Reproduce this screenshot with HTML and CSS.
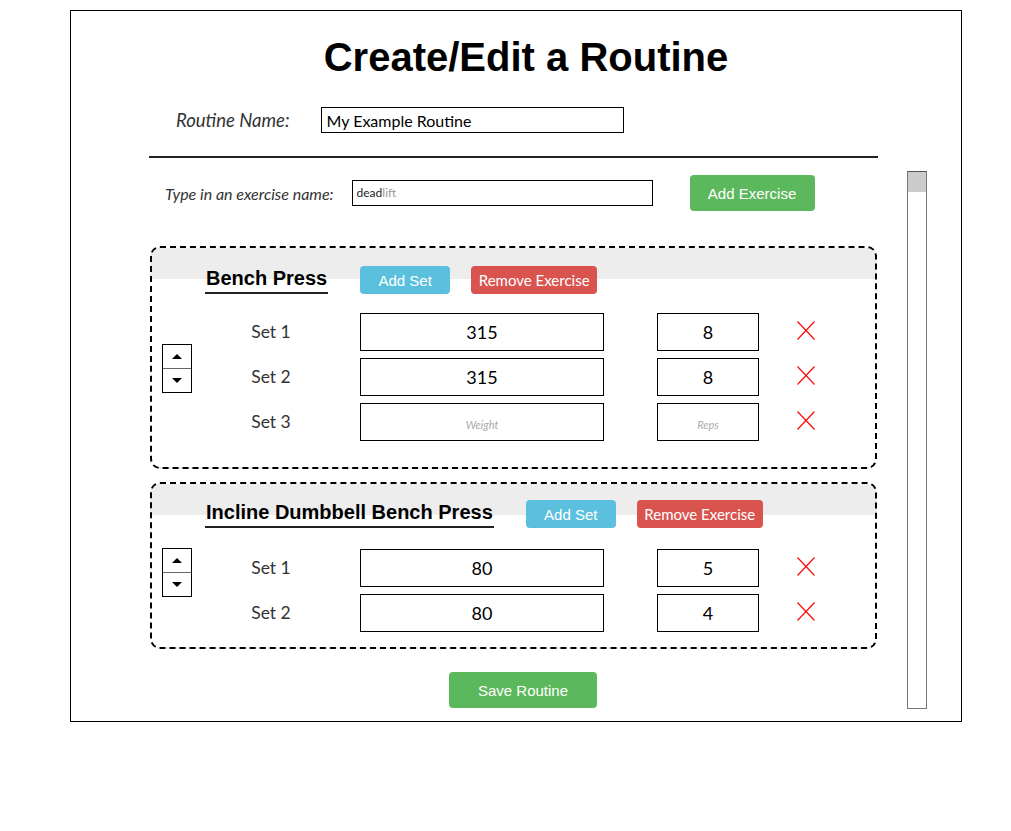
FILE: index.html
```html
<!DOCTYPE html>
<html>
<head>
    <title>Create/Edit a Routine</title>
    <link rel="stylesheet" href="styles.css">
</head>
<body>
    <div class="frame">
        <h1 class="title">Create/Edit a Routine</h1>

        <div class="name-row">
            <label for="routineName" class="name-label">Routine Name:</label>
            <input type="text" id="routineName" class="name-input" value="My Example Routine">
        </div>

        <div class="layout">
            <div class="main">
                <hr class="divider">

                <div class="entry-row">
                    <label class="entry-label">Type in an exercise name:</label>
                    <div class="entry-input"><span class="typed">dead</span><span class="suggest">lift</span></div>
                    <button type="button" class="btn btn-green btn-add-exercise">Add Exercise</button>
                </div>

                <!-- exercise 1 -->
                <div class="card card-roomy">
                    <div class="card-head">
                        <h3 class="exercise-name">Bench Press</h3>
                        <button type="button" class="btn btn-blue btn-add-set">Add Set</button>
                        <button type="button" class="btn btn-red btn-remove">Remove Exercise</button>
                    </div>
                    <div class="card-body">
                        <div class="spinner">
                            <button type="button" class="spin-btn"><svg width="10" height="5" viewBox="0 0 10 5"><path d="M0 5 L5 0 L10 5 Z" fill="#000"/></svg></button>
                            <button type="button" class="spin-btn"><svg width="10" height="5" viewBox="0 0 10 5"><path d="M0 0 L5 5 L10 0 Z" fill="#000"/></svg></button>
                        </div>
                        <div class="sets">
                            <div class="set-row">
                                <span class="set-label">Set 1</span>
                                <input type="text" class="weight" value="315" placeholder="Weight">
                                <input type="text" class="reps" value="8" placeholder="Reps">
                                <button type="button" class="remove-set"><svg width="18" height="19" viewBox="0 0 18 19"><path d="M0.5 0.5 L17.5 18.5 M17.5 0.5 L0.5 18.5" stroke="#f00" stroke-width="1.1"/></svg></button>
                            </div>
                            <div class="set-row">
                                <span class="set-label">Set 2</span>
                                <input type="text" class="weight" value="315" placeholder="Weight">
                                <input type="text" class="reps" value="8" placeholder="Reps">
                                <button type="button" class="remove-set"><svg width="18" height="19" viewBox="0 0 18 19"><path d="M0.5 0.5 L17.5 18.5 M17.5 0.5 L0.5 18.5" stroke="#f00" stroke-width="1.1"/></svg></button>
                            </div>
                            <div class="set-row">
                                <span class="set-label">Set 3</span>
                                <input type="text" class="weight" value="" placeholder="Weight">
                                <input type="text" class="reps" value="" placeholder="Reps">
                                <button type="button" class="remove-set"><svg width="18" height="19" viewBox="0 0 18 19"><path d="M0.5 0.5 L17.5 18.5 M17.5 0.5 L0.5 18.5" stroke="#f00" stroke-width="1.1"/></svg></button>
                            </div>
                        </div>
                    </div>
                </div>

                <!-- exercise 2 -->
                <div class="card">
                    <div class="card-head">
                        <h3 class="exercise-name">Incline Dumbbell Bench Press</h3>
                        <button type="button" class="btn btn-blue btn-add-set">Add Set</button>
                        <button type="button" class="btn btn-red btn-remove">Remove Exercise</button>
                    </div>
                    <div class="card-body">
                        <div class="spinner">
                            <button type="button" class="spin-btn"><svg width="10" height="5" viewBox="0 0 10 5"><path d="M0 5 L5 0 L10 5 Z" fill="#000"/></svg></button>
                            <button type="button" class="spin-btn"><svg width="10" height="5" viewBox="0 0 10 5"><path d="M0 0 L5 5 L10 0 Z" fill="#000"/></svg></button>
                        </div>
                        <div class="sets">
                            <div class="set-row">
                                <span class="set-label">Set 1</span>
                                <input type="text" class="weight" value="80" placeholder="Weight">
                                <input type="text" class="reps" value="5" placeholder="Reps">
                                <button type="button" class="remove-set"><svg width="18" height="19" viewBox="0 0 18 19"><path d="M0.5 0.5 L17.5 18.5 M17.5 0.5 L0.5 18.5" stroke="#f00" stroke-width="1.1"/></svg></button>
                            </div>
                            <div class="set-row">
                                <span class="set-label">Set 2</span>
                                <input type="text" class="weight" value="80" placeholder="Weight">
                                <input type="text" class="reps" value="4" placeholder="Reps">
                                <button type="button" class="remove-set"><svg width="18" height="19" viewBox="0 0 18 19"><path d="M0.5 0.5 L17.5 18.5 M17.5 0.5 L0.5 18.5" stroke="#f00" stroke-width="1.1"/></svg></button>
                            </div>
                        </div>
                    </div>
                </div>

                <button type="button" class="btn btn-green btn-save">Save Routine</button>
            </div>

            <div class="scrollbar">
                <div class="scroll-thumb"></div>
            </div>
        </div>
    </div>
</body>
</html>
```

FILE: styles.css
```css
body {
    margin: 0;
    font-family: "Lato", "Noto Sans", sans-serif;
    color: #000;
    background: #fff;
}

.frame {
    width: 778px;
    margin: 10px 0 0 70px;
    padding: 23px 34px 12px 78px;
    border: 1px solid #000;
}

.title {
    margin: 0;
    padding-right: 24px;
    font-family: "Liberation Sans", Arial, sans-serif;
    font-size: 40px;
    line-height: 46px;
    font-weight: bold;
    text-align: center;
}

.name-row {
    display: flex;
    align-items: center;
    margin-top: 27px;
    padding-left: 27px;
}

.name-label {
    font-size: 18.5px;
    font-style: italic;
    color: #333;
    margin-right: 31px;
}

.name-input {
    width: 303px;
    height: 26px;
    box-sizing: border-box;
    border: 1px solid #000;
    padding: 0 5px;
    font-family: "Lato", "Noto Sans", sans-serif;
    font-size: 16px;
    color: #000;
}

.layout {
    display: flex;
    margin-top: 23px;
}

.main {
    width: 729px;
}

.divider {
    margin: 0;
    border: none;
    border-top: 2px solid #222;
}

.entry-row {
    display: flex;
    align-items: center;
    margin-top: 17px;
    padding-left: 16px;
}

.entry-label {
    font-size: 16px;
    font-style: italic;
    color: #333;
    margin-right: 18px;
}

.entry-input {
    width: 301px;
    height: 26px;
    box-sizing: border-box;
    border: 1px solid #000;
    padding: 0 4px;
    font-size: 12px;
    line-height: 24px;
}

.typed {
    color: #222;
}

.suggest {
    color: #999;
}

.btn {
    border: none;
    border-radius: 4px;
    color: #fff;
    font-family: "Liberation Sans", Arial, sans-serif;
    font-size: 15px;
    cursor: pointer;
    padding: 0;
}

.btn-green {
    background-color: #5cb85c;
}

.btn-blue {
    background-color: #5bc0de;
}

.btn-red {
    background-color: #d9534f;
    font-family: "Lato", "Noto Sans", sans-serif;
    font-size: 15px;
}

.btn-add-exercise {
    width: 125px;
    height: 36px;
    margin-left: 37px;
}

.card {
    margin: 13px 1px 0 1px;
    border: 2px dashed #000;
    border-radius: 10px;
    background: linear-gradient(#ededed 0 31px, #fff 31px);
    padding-bottom: 15px;
}

.card-roomy {
    margin-top: 35px;
    padding-bottom: 26px;
}

.card-head {
    display: flex;
    align-items: flex-end;
    padding: 16px 0 0 53px;
}

.card-roomy .card-head {
    padding-top: 18px;
}

.exercise-name {
    margin: 0;
    padding: 0 1px 2px 1px;
    border-bottom: 2px solid #222;
    font-family: "Liberation Sans", Arial, sans-serif;
    font-size: 20px;
    line-height: 23px;
    font-weight: bold;
}

.btn-add-set {
    width: 90px;
    height: 28px;
    margin-left: 32px;
}

.btn-remove {
    width: 126px;
    height: 28px;
    margin-left: 21px;
}

.card-body {
    display: flex;
    align-items: flex-start;
    margin-top: 21px;
    padding-left: 10px;
}

.card-roomy .card-body {
    margin-top: 19px;
}

.spinner {
    display: flex;
    flex-direction: column;
    width: 30px;
    height: 49px;
    margin-top: -1px;
    border: 1px solid #000;
    box-sizing: border-box;
}

.card-roomy .spinner {
    margin-top: 31px;
}

.spin-btn {
    flex: 1;
    border: none;
    background: #fff;
    padding: 0;
    display: flex;
    align-items: center;
    justify-content: center;
}

.spin-btn + .spin-btn {
    border-top: 1px solid #666;
}

.sets {
    display: flex;
    flex-direction: column;
    gap: 7px;
}

.set-row {
    display: flex;
    align-items: center;
    height: 38px;
}

.set-label {
    width: 158px;
    text-align: center;
    font-size: 17.5px;
    color: #333;
    margin-top: -2px;
}

.weight,
.reps {
    height: 38px;
    box-sizing: border-box;
    border: 1px solid #000;
    text-align: center;
    font-family: "Lato", "Noto Sans", sans-serif;
    font-size: 18px;
    color: #000;
    padding: 0;
}

.weight::placeholder,
.reps::placeholder {
    font-size: 11px;
    font-style: italic;
    color: #aaa;
}

.weight {
    width: 244px;
    margin-left: 10px;
}

.reps {
    width: 102px;
    margin-left: 53px;
}

.remove-set {
    margin-left: 38px;
    margin-top: -3px;
    border: none;
    background: none;
    padding: 0;
    display: flex;
    cursor: pointer;
}

.btn-save {
    width: 148px;
    height: 36px;
    margin: 23px 0 0 300px;
}

.scrollbar {
    width: 20px;
    height: 538px;
    margin: 15px 0 0 29px;
    border: 1px solid #777;
    box-sizing: border-box;
    border-top-color: #555;
}

.scroll-thumb {
    height: 20px;
    background: #ccc;
}
```
